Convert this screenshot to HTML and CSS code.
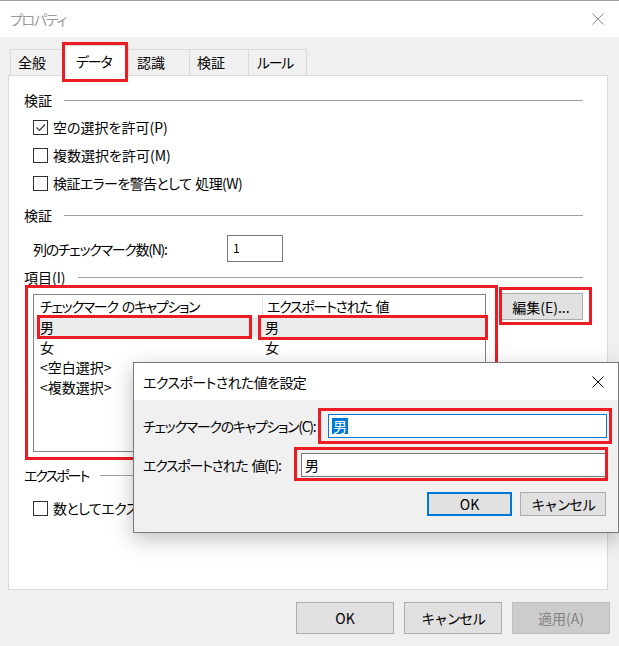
FILE: index.html
```html
<!DOCTYPE html>
<html lang="ja">
<head>
  <meta charset="UTF-8">
  <title>プロパティ</title>
  <link rel="stylesheet" href="styles.css">
</head>
<body>
  <div class="titlebar">
    <span class="title kana">プロパティ</span>
    <svg class="close" viewBox="0 0 12 12"><path d="M0.5 0.5 L11.5 11.5 M11.5 0.5 L0.5 11.5" stroke="#8a8a8a" stroke-width="1" fill="none"/></svg>
  </div>

  <div class="tabs">
    <div class="tab tab-general">全般</div>
    <div class="tab tab-data active kana">データ</div>
    <div class="tab tab-ocr">認識</div>
    <div class="tab tab-valid">検証</div>
    <div class="tab tab-rule kana">ルール</div>
  </div>

  <div class="panel">
    <div class="group-head">検証</div>
    <div class="checks">
      <div class="check">
        <span class="box"><svg viewBox="0 0 13 13"><path d="M2.5 6.5 L5.5 9.5 L11 3.5" stroke="#333" stroke-width="1.2" fill="none"/></svg></span>
        <span>空の選択を許可(P)</span>
      </div>
      <div class="check"><span class="box"></span><span>複数選択を許可(M)</span></div>
      <div class="check kana-s"><span class="box"></span><span>検証エラーを警告として<span class="sp"></span>処理(W)</span></div>
    </div>

    <div class="group-head gh-count">検証</div>
    <div class="field-row">
      <span class="field-label kana">列のチェックマーク数(N):</span>
      <div class="num-input">1</div>
    </div>

    <div class="group-head gh-items">項目(I)</div>
    <div class="items">
      <div class="listview">
        <div class="lv-row lv-header kana">
          <div>チェックマーク<span class="sp"></span>のキャプション</div>
          <div>エクスポートされた<span class="sp"></span>値</div>
        </div>
        <div class="lv-row selected"><div>男</div><div>男</div></div>
        <div class="lv-row"><div>女</div><div>女</div></div>
        <div class="lv-row"><div>&lt;空白選択&gt;</div><div></div></div>
        <div class="lv-row"><div>&lt;複数選択&gt;</div><div></div></div>
      </div>
      <button class="btn btn-edit">編集(E)...</button>
    </div>

    <div class="group-head gh-export kana-l">エクスポート</div>
    <div class="check check-export kana-s"><span class="box"></span><span>数としてエクスポート</span></div>
  </div>

  <div class="footer">
    <button class="btn">OK</button>
    <button class="btn kana">キャンセル</button>
    <button class="btn disabled">適用(A)</button>
  </div>

  <div class="subdialog">
    <div class="sd-title">
      <span class="kana-s">エクスポートされた値を設定</span>
      <svg class="close" viewBox="0 0 12 12"><path d="M0.5 0.5 L11.5 11.5 M11.5 0.5 L0.5 11.5" stroke="#000" stroke-width="1" fill="none"/></svg>
    </div>
    <div class="sd-body">
      <div class="sd-row">
        <span class="kana">チェックマークのキャプション(C):</span>
        <div class="sd-input focused"><span class="sel">男</span></div>
      </div>
      <div class="sd-row">
        <span class="kana">エクスポートされた<span class="sp"></span>値(E):</span>
        <div class="sd-input wide">男</div>
      </div>
      <div class="sd-buttons">
        <button class="btn btn-default">OK</button>
        <button class="btn kana">キャンセル</button>
      </div>
    </div>
  </div>

  <!-- 赤枠の注釈 -->
  <div class="mark mark-tab"></div>
  <div class="mark mark-list"></div>
  <div class="mark mark-caption"></div>
  <div class="mark mark-value"></div>
  <div class="mark mark-edit"></div>
  <div class="mark mark-sd-caption"></div>
  <div class="mark mark-sd-value"></div>
</body>
</html>
```

FILE: styles.css
```css
* {
  box-sizing: border-box;
}
body {
  margin: 0;
  width: 619px;
  height: 646px;
  overflow: hidden;
  position: relative;
  background: #f0f0f0;
  font-family: "Noto Sans CJK JP", "Noto Sans", sans-serif;
  font-size: 14px;
  font-feature-settings: "palt" 1;
  color: #000;
}
/* Meiryo UI のカナは詰まっているので字間を詰める */
.kana {
  letter-spacing: -1.3px;
}
.kana-s {
  letter-spacing: -0.6px;
}
.kana-l {
  letter-spacing: -2px;
}
.sp {
  display: inline-block;
  width: 4px;
}

.titlebar {
  height: 37px;
  background: #fff;
  border-top: 1px solid #a0a0a0;
  display: flex;
  align-items: center;
  justify-content: space-between;
  padding: 0 15px 0 10px;
}
.titlebar .title {
  color: #9a9a9a;
}
.close {
  width: 12px;
  height: 12px;
}

.tabs {
  display: flex;
  align-items: flex-end;
  height: 31px;
  margin-top: 7px;
  padding-left: 10px;
}
.tab {
  height: 26px;
  line-height: 25px;
  border: 1px solid #d9d9d9;
  border-bottom: none;
  background: #f0f0f0;
  white-space: nowrap;
}
.tab-general { width: 55px; padding-left: 7px; }
.tab-ocr { width: 63px; padding-left: 9px; }
.tab-valid { width: 60px; padding-left: 7px; margin-left: -1px; }
.tab-rule { width: 59px; padding-left: 8px; margin-left: -1px; }
.tab.active {
  position: relative;
  z-index: 1;
  width: 66px;
  height: 31px;
  margin: 0 -2px -1px;
  padding-left: 12px;
  line-height: 31px;
  background: #fff;
}

.panel {
  margin-left: 8px;
  width: 600px;
  height: 515px;
  background: #fff;
  border: 1px solid #d9d9d9;
  padding: 14px 24px 0 15px;
}
.group-head {
  display: flex;
  align-items: center;
  gap: 12px;
  line-height: 20px;
}
.group-head::after {
  content: "";
  flex: 1;
  height: 1px;
  background: #a0a0a0;
}
.gh-count { margin-top: 8px; }
.gh-items { margin-top: 5px; }
.gh-export { margin-top: 13px; }

.checks {
  margin-top: 3px;
}
.check {
  display: flex;
  align-items: center;
  gap: 5px;
  height: 28px;
  padding-left: 9px;
  white-space: nowrap;
}
.check-export {
  margin-top: 9px;
}
.box {
  flex-shrink: 0;
  width: 15px;
  height: 15px;
  border: 1px solid #333;
  background: #fff;
  display: flex;
}
.box svg {
  width: 13px;
  height: 13px;
}

.field-row {
  display: flex;
  align-items: center;
  height: 27px;
  margin-top: 10px;
  padding-left: 9px;
}
.field-label {
  width: 194px;
}
.num-input {
  width: 56px;
  height: 27px;
  border: 1px solid #7a7a7a;
  padding: 4px 0 0 5px;
  font-size: 12px;
  line-height: 16px;
}

.items {
  display: flex;
  align-items: flex-start;
  gap: 13px;
  margin-top: 6px;
  padding-left: 9px;
}
.listview {
  margin-top: 1px;
  width: 457px;
  height: 158px;
  border: 1px solid #828282;
  background: #fff;
}
.lv-row {
  display: grid;
  grid-template-columns: 228px 1fr;
  height: 20px;
  line-height: 20px;
  white-space: nowrap;
}
.lv-row > div:first-child {
  padding-left: 6px;
}
.lv-row > div:last-child {
  padding-left: 3px;
}
.lv-header {
  height: 22px;
  line-height: 22px;
}
.lv-header > div:last-child {
  border-left: 1px solid #e5e5e5;
  padding-left: 4px;
}
.lv-row.selected {
  background: #ebebeb;
}

.btn {
  font-family: inherit;
  font-size: 14px;
  color: #000;
  background: #e1e1e1;
  border: 1px solid #adadad;
  padding: 0;
}
.btn-edit {
  width: 85px;
  height: 27px;
}

.footer {
  display: flex;
  justify-content: flex-end;
  gap: 10px;
  margin-top: 12px;
  padding-right: 9px;
}
.footer .btn {
  width: 98px;
  height: 32px;
}
.footer .btn.disabled {
  background: #cccccc;
  border-color: #bfbfbf;
  color: #838383;
}

.subdialog {
  position: absolute;
  left: 133px;
  top: 362px;
  width: 486px;
  height: 171px;
  border: 1px solid #7a7a7a;
  background: #f0f0f0;
  box-shadow: 0 6px 20px rgba(0, 0, 0, 0.25);
  z-index: 5;
}
.sd-title {
  height: 37px;
  background: #fff;
  display: flex;
  align-items: center;
  justify-content: space-between;
  padding: 0 14px 0 9px;
}
.sd-body {
  padding: 14px 11px 0 9px;
}
.sd-row {
  display: flex;
  align-items: center;
  height: 24px;
  white-space: nowrap;
}
.sd-row + .sd-row {
  margin-top: 15px;
}
.sd-input {
  flex-shrink: 0;
  margin-left: auto;
  height: 24px;
  border: 1px solid #7a7a7a;
  background: #fff;
  padding: 0 3px;
  line-height: 22px;
}
.sd-input.focused {
  width: 279px;
  border-color: #0078d7;
  display: flex;
  align-items: center;
}
.sd-input.wide {
  width: 305px;
  margin-right: 1px;
}
.sel {
  display: inline-block;
  height: 16px;
  line-height: 16px;
  padding: 0 1px;
  background: #0078d7;
  color: #fff;
}
.sd-buttons {
  display: flex;
  justify-content: flex-end;
  gap: 8px;
  margin-top: 15px;
  padding-right: 1px;
}
.sd-buttons .btn {
  width: 86px;
  height: 24px;
}
.sd-buttons .btn-default {
  width: 85px;
  border: 2px solid #0078d7;
}

.mark {
  position: absolute;
  border: 3px solid #ed1c24;
  z-index: 6;
}
.mark-tab { left: 62px; top: 42px; width: 66px; height: 40px; }
.mark-list { left: 25px; top: 285px; width: 473px; height: 175px; z-index: 4; }
.mark-caption { left: 37px; top: 315px; width: 215px; height: 24px; }
.mark-value { left: 258px; top: 315px; width: 230px; height: 25px; }
.mark-edit { left: 499px; top: 287px; width: 93px; height: 38px; }
.mark-sd-caption { left: 318px; top: 408px; width: 294px; height: 36px; }
.mark-sd-value { left: 294px; top: 447px; width: 314px; height: 34px; }
```
